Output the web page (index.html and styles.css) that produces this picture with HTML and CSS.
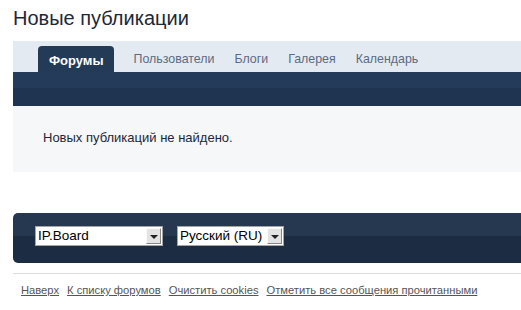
FILE: index.html
```html
<!DOCTYPE html>
<html>
<head>
  <meta charset="UTF-8">
  <title>Новые публикации</title>
  <link rel="stylesheet" href="styles.css">
</head>
<body>
  <div class="page">
    <h1>Новые публикации</h1>
    <div class="nav">
      <ul class="tabs">
        <li class="active">Форумы</li>
        <li>Пользователи</li>
        <li>Блоги</li>
        <li>Галерея</li>
        <li>Календарь</li>
      </ul>
      <div class="subnav"></div>
    </div>
    <div class="content">
      <p>Новых публикаций не найдено.</p>
    </div>
    <div class="footer-bar">
      <div class="select select-skin">
        <span class="select-value">IP.Board</span>
        <span class="select-arrow"></span>
      </div>
      <div class="select select-lang">
        <span class="select-value">Русский (RU)</span>
        <span class="select-arrow"></span>
      </div>
    </div>
    <div class="footer-links">
      <a href="#">Наверх</a>
      <a href="#">К списку форумов</a>
      <a href="#">Очистить cookies</a>
      <a href="#">Отметить все сообщения прочитанными</a>
    </div>
  </div>
</body>
</html>
```

FILE: styles.css
```css
body {
  margin: 0;
  font-family: Arial, "Liberation Sans", sans-serif;
  background: #fff;
  overflow: hidden;
}

.page {
  padding-left: 13px;
}

h1 {
  font-size: 20px;
  font-weight: normal;
  line-height: 24px;
  color: #1c2837;
  margin: 6px 0 11px;
}

.nav {
  background-color: #e4eaf2;
}

.tabs {
  list-style: none;
  margin: 0;
  padding: 5px 0 0 25px;
  display: flex;
  height: 26px;
}

.tabs li {
  font-size: 12.4px;
  color: #5b6b82;
  padding: 0 10px;
  line-height: 26px;
}

.tabs li.active {
  background-color: #243b58;
  color: #fff;
  font-size: 13px;
  font-weight: bold;
  padding: 0 10px 0 11px;
  margin-right: 10px;
  border-radius: 4px 4px 0 0;
  line-height: 30px;
}

.subnav {
  height: 34px;
  background: linear-gradient(to bottom, #243c59 0, #243c59 16px, #1e3450 16px, #1e3450 100%);
}

.content {
  background-color: #f6f7f9;
  padding: 24px 30px 26px;
}

.content p {
  margin: 0;
  font-size: 13px;
  line-height: 16px;
  color: #1c2837;
}

.footer-bar {
  margin-top: 41px;
  height: 50px;
  box-sizing: border-box;
  padding: 13px 0 0 22px;
  display: flex;
  gap: 14px;
  border-radius: 5px 0 0 5px;
  background: linear-gradient(to bottom, #263850 0, #263850 23px, #1c2c43 23px, #1c2c43 100%);
}

.select {
  height: 20px;
  box-sizing: border-box;
  border: 1px solid #a5a5a5;
  background-color: #fff;
  display: flex;
  align-items: stretch;
}

.select-skin {
  width: 128px;
}

.select-lang {
  width: 107px;
}

.select-value {
  flex: 1;
  font-size: 13.5px;
  line-height: 18px;
  color: #000;
  padding-left: 2px;
  white-space: nowrap;
  overflow: hidden;
}

.select-arrow {
  width: 15px;
  margin: 1px;
  box-sizing: border-box;
  background-color: #e3e3e3;
  border: 1px solid #888;
  border-top-color: #fafafa;
  border-left-color: #fafafa;
  display: flex;
  align-items: center;
  justify-content: center;
}

.select-arrow::after {
  content: "";
  border-left: 4px solid transparent;
  border-right: 4px solid transparent;
  border-top: 4px solid #222;
  margin-top: 1px;
}

.footer-links {
  margin-top: 10px;
  border-top: 1px solid #dcdcdc;
  padding: 10px 0 0 8px;
  display: flex;
  gap: 8px;
}

.footer-links a {
  font-size: 11.2px;
  color: #555;
  text-decoration: underline;
}
```
